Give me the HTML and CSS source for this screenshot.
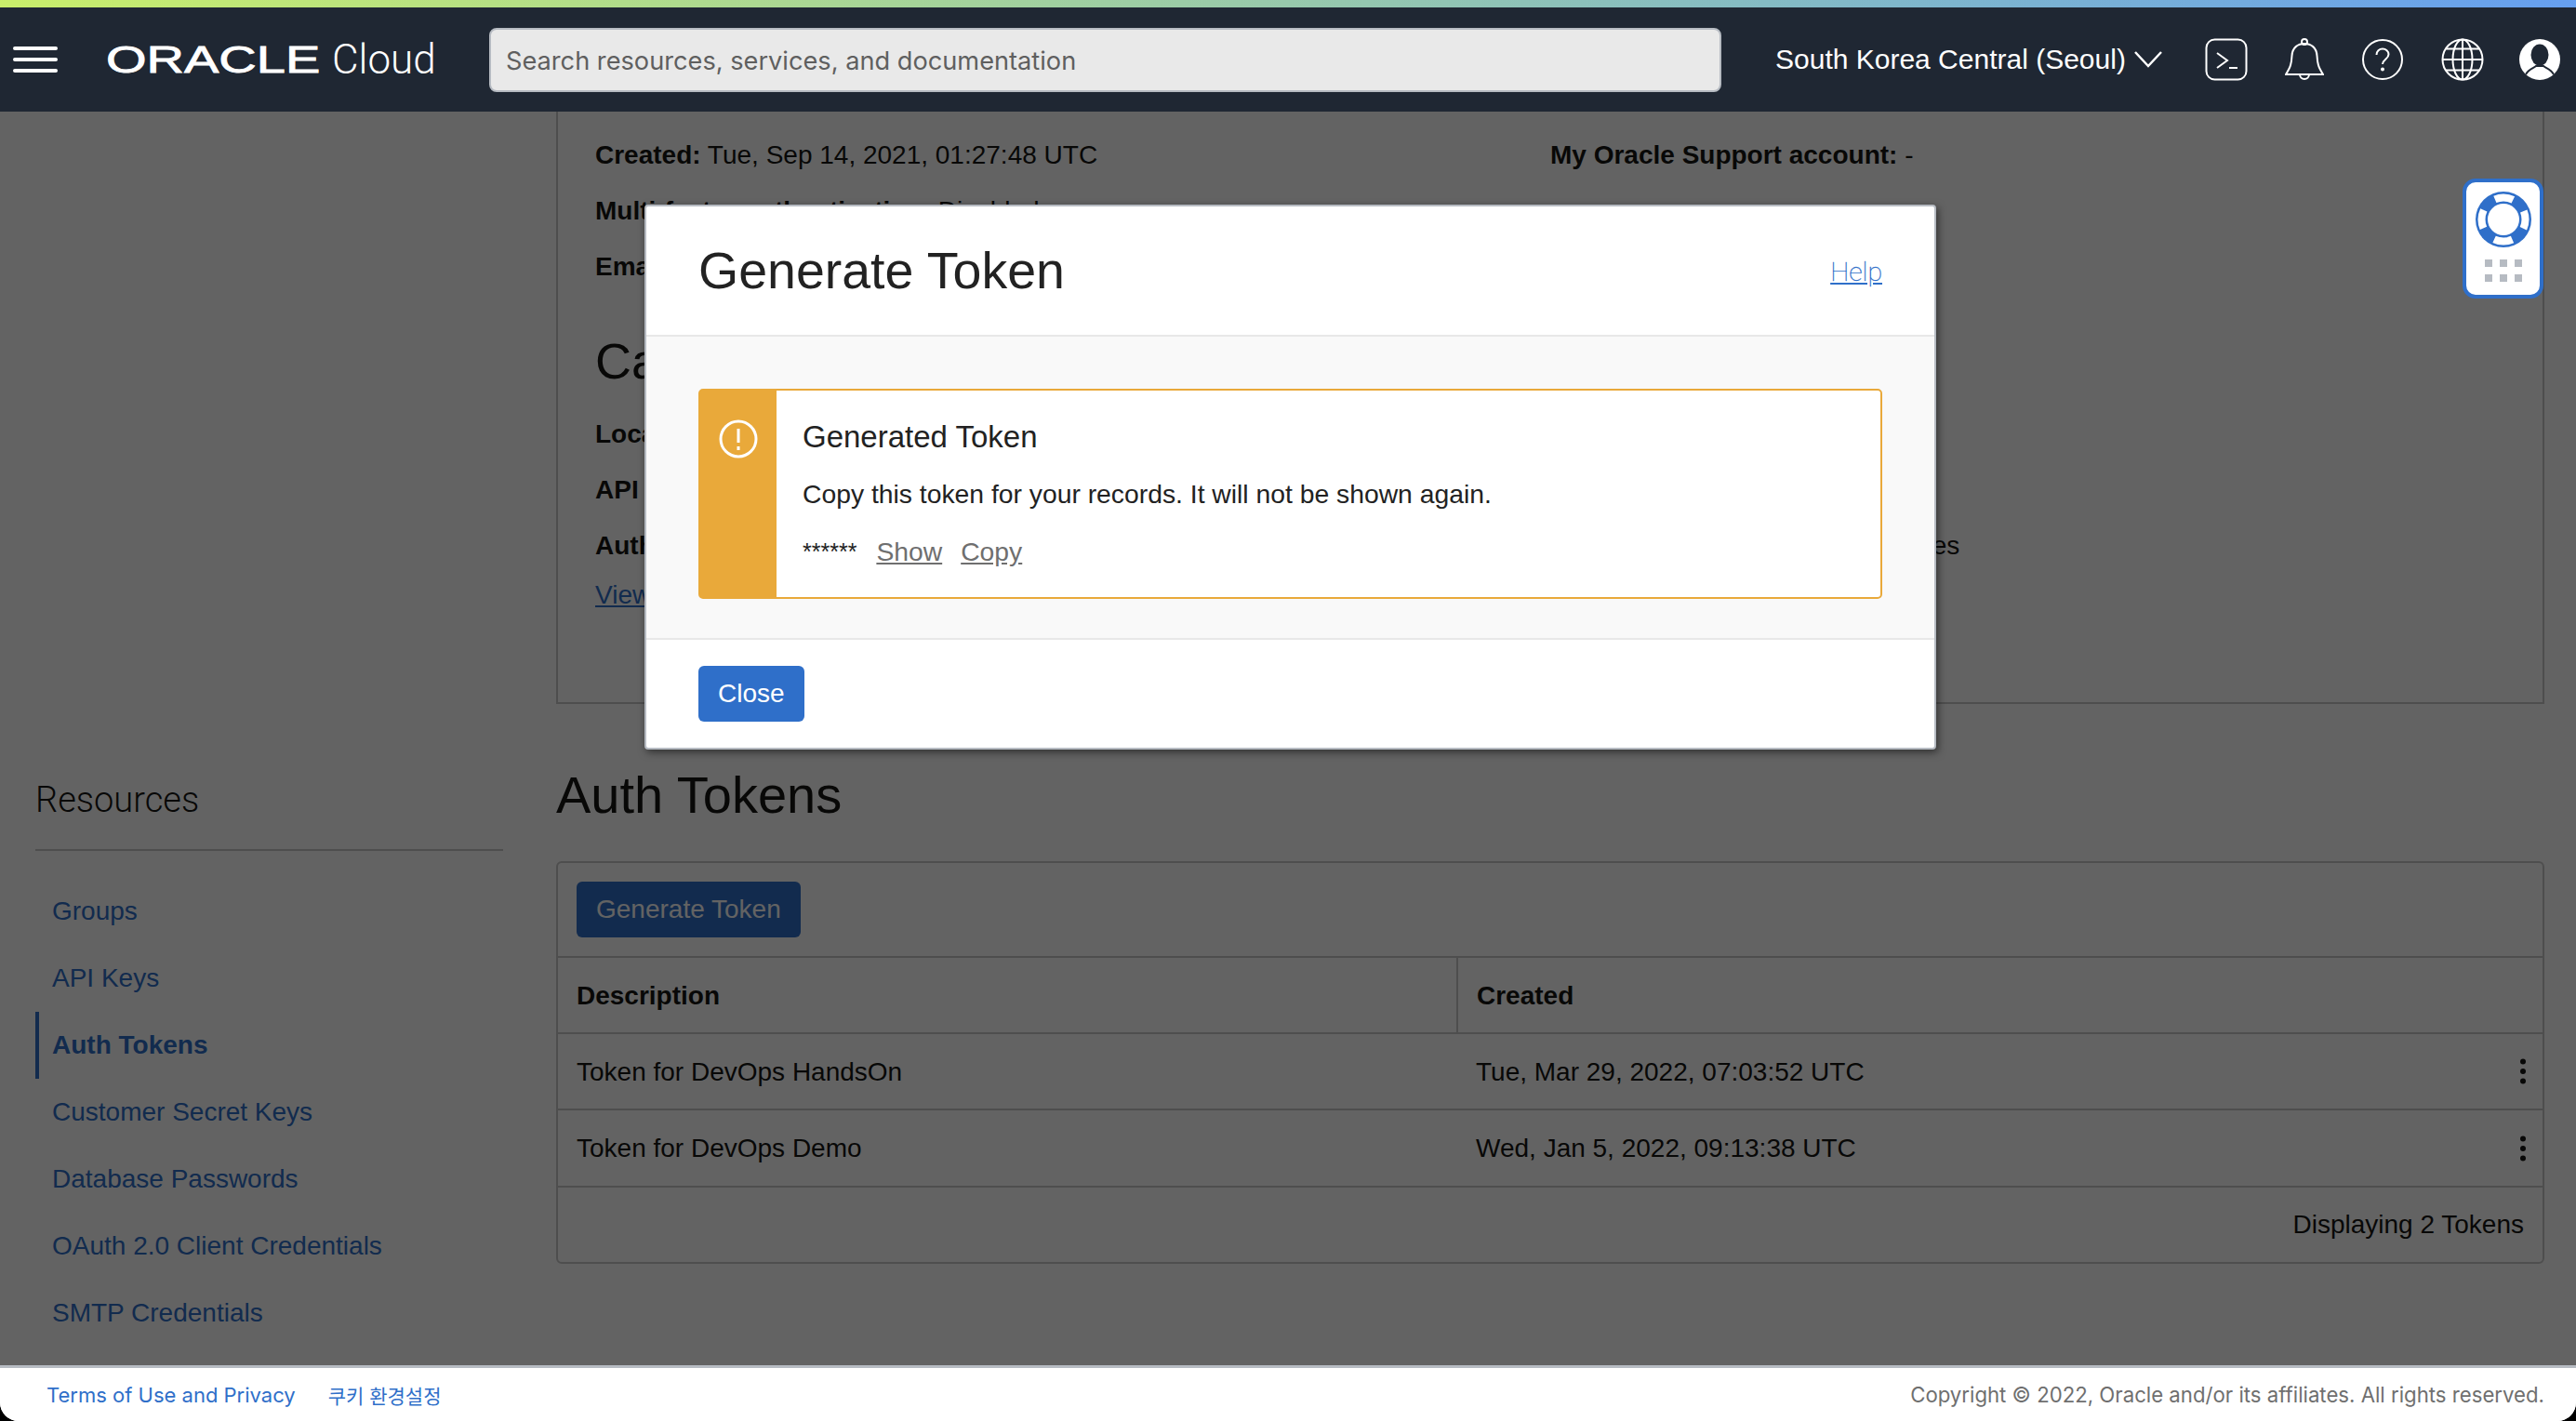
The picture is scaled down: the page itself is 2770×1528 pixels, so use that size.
FILE: index.html
```html
<!DOCTYPE html>
<html>
<head>
    <meta charset="UTF-8">
    <title>Auth Tokens - Oracle Cloud</title>
    <link rel="stylesheet" href="styles.css">
</head>
<body>
    <div class="stripe"></div>
    <header class="topbar">
        <div class="menu-btn"><span></span><span></span><span></span></div>
        <div class="brand">
            <span class="brand-oracle">ORACLE</span>
            <span class="brand-cloud">Cloud</span>
        </div>
        <div class="search">Search resources, services, and documentation</div>
        <div class="region">
            South Korea Central (Seoul)
            <svg width="30" height="18" viewBox="0 0 30 18" fill="none" stroke="#fff" stroke-width="2.5"><path d="M1 1l14 15L29 1"/></svg>
        </div>
        <div class="top-icons">
            <svg width="46" height="46" viewBox="0 0 46 46" fill="none" stroke="#fff" stroke-width="2"><rect x="1.500" y="1.500" width="43" height="43" rx="9"/><path d="M13 16l11 8-11 8M26 32h9"/></svg>
            <svg width="42" height="46" viewBox="0 0 42 46" fill="none" stroke="#fff" stroke-width="2"><circle cx="21" cy="4" r="3"/><path d="M1 39c5-8 6-11 6.500-20C8 10 14 6 21 6s13 4 13.500 13c.5 9 1.500 12 6.500 20z"/><path d="M16 39a5 5 0 0 0 10 0"/></svg>
            <svg width="46" height="46" viewBox="0 0 46 46" fill="none" stroke="#fff" stroke-width="2"><circle cx="23" cy="23" r="21"/><path d="M16.500 18c0-4 3-6.500 6.500-6.500s6.500 2.500 6.500 6c0 5-6.500 5.500-6.500 10.500"/><circle cx="23" cy="33.500" r="1" fill="#fff"/></svg>
            <svg width="46" height="46" viewBox="0 0 46 46" fill="none" stroke="#fff" stroke-width="2"><circle cx="23" cy="23" r="21.500"/><ellipse cx="23" cy="23" rx="10.500" ry="21.500"/><path d="M23 1.500v43M1.500 23h43M5 11.500h36M5 34.500h36"/></svg>
            <svg class="avatar" width="44" height="44" viewBox="0 0 44 44"><circle cx="22" cy="22" r="22" fill="#fff"/><ellipse cx="22" cy="17" rx="9.500" ry="11.500" fill="#1f2733"/><path d="M7 38c3-6 9-7 11-9h8c2 2 8 3 11 9" fill="none" stroke="#1f2733" stroke-width="2"/></svg>
        </div>
    </header>

    <div class="content">
        <aside class="sidebar">
            <h3>Resources</h3>
            <ul class="side-nav">
                <li><a href="#">Groups</a></li>
                <li><a href="#">API Keys</a></li>
                <li class="active"><a href="#">Auth Tokens</a></li>
                <li><a href="#">Customer Secret Keys</a></li>
                <li><a href="#">Database Passwords</a></li>
                <li><a href="#">OAuth 2.0 Client Credentials</a></li>
                <li><a href="#">SMTP Credentials</a></li>
            </ul>
        </aside>

        <main class="main">
            <section class="info-panel">
                <div class="info-grid">
                    <div class="info-row"><b>Created:</b> Tue, Sep 14, 2021, 01:27:48 UTC</div>
                    <div class="info-row"><b>My Oracle Support account:</b> -</div>
                    <div class="info-row"><b>Multi-factor authentication:</b> Disabled</div>
                    <div class="info-row"></div>
                    <div class="info-row"><b>Email:</b> -</div>
                    <div class="info-row"></div>
                </div>
                <h2>Capabilities</h2>
                <div class="info-grid">
                    <div class="info-row"><b>Local Password:</b> Yes</div>
                    <div class="info-row"><b>SMTP Credentials:</b> Yes</div>
                    <div class="info-row"><b>API Keys:</b> Yes</div>
                    <div class="info-row"><b>Customer Secret Keys:</b> Yes</div>
                    <div class="info-row"><b>Auth Tokens:</b> Yes</div>
                    <div class="info-row"><b>OAuth 2.0 Client Credentials:</b> Yes</div>
                </div>
                <a href="#" class="view-link">View Details</a>
            </section>

            <h1>Auth Tokens</h1>
            <section class="tokens">
                <div class="toolbar"><button type="button" class="button">Generate Token</button></div>
                <table>
                    <thead>
                        <tr><th class="col-desc">Description</th><th colspan="2">Created</th></tr>
                    </thead>
                    <tbody>
                        <tr>
                            <td>Token for DevOps HandsOn</td>
                            <td>Tue, Mar 29, 2022, 07:03:52 UTC</td>
                            <td class="col-menu"><svg width="8" height="28" viewBox="0 0 8 28" fill="#161513"><circle cx="4" cy="3.500" r="3"/><circle cx="4" cy="14" r="3"/><circle cx="4" cy="24.500" r="3"/></svg></td>
                        </tr>
                        <tr>
                            <td>Token for DevOps Demo</td>
                            <td>Wed, Jan 5, 2022, 09:13:38 UTC</td>
                            <td class="col-menu"><svg width="8" height="28" viewBox="0 0 8 28" fill="#161513"><circle cx="4" cy="3.500" r="3"/><circle cx="4" cy="14" r="3"/><circle cx="4" cy="24.500" r="3"/></svg></td>
                        </tr>
                    </tbody>
                </table>
                <div class="tokens-foot">Displaying 2 Tokens</div>
            </section>
        </main>

        <div class="overlay"></div>

        <div class="help-widget">
            <svg width="62" height="62" viewBox="0 0 62 62">
                <circle cx="31" cy="31" r="30" fill="#2f6fc9"/>
                <circle cx="31" cy="31" r="23.500" fill="none" stroke="#fff" stroke-width="8" stroke-dasharray="20 16.900" stroke-dashoffset="10"/>
                <circle cx="31" cy="31" r="17" fill="#fff"/>
            </svg>
            <div class="grip"><i></i><i></i><i></i><i></i><i></i><i></i></div>
        </div>

        <div class="modal">
            <div class="modal-head">
                <div class="modal-title">Generate Token</div>
                <a href="#" class="help-link">Help</a>
            </div>
            <div class="modal-body">
                <div class="alert">
                    <div class="alert-side">
                        <svg width="42" height="42" viewBox="0 0 42 42" fill="none" stroke="#fff" stroke-width="3"><circle cx="21" cy="21" r="19"/><path d="M21 10v15M21 29v4"/></svg>
                    </div>
                    <div class="alert-main">
                        <div class="alert-title">Generated Token</div>
                        <p>Copy this token for your records. It will not be shown again.</p>
                        <div class="token-line">
                            <span class="stars">******</span>
                            <a href="#">Show</a>
                            <a href="#">Copy</a>
                        </div>
                    </div>
                </div>
            </div>
            <div class="modal-foot"><button type="button" class="button">Close</button></div>
        </div>
    </div>

    <footer class="page-foot">
        <a href="#">Terms of Use and Privacy</a>
        <a href="#" class="cookie-link">쿠키 환경설정</a>
        <span class="copyright">Copyright © 2022, Oracle and/or its affiliates. All rights reserved.</span>
    </footer>
</body>
</html>
```

FILE: styles.css
```css
html {
    background-color: #000;
}
body {
    margin: 0;
    height: 100vh;
    display: flex;
    flex-direction: column;
    overflow: hidden;
    background-color: #fff;
    border-radius: 0 0 20px 20px;
    font-family: "Liberation Sans", Arial, sans-serif;
    font-size: 28px;
    color: #161513;
}
a {
    color: #2f6fc9;
}
.stripe {
    height: 8px;
    background: linear-gradient(90deg, #c9ee6b, #83bac6 70%, #669ff0);
}

/* top bar */
.topbar {
    height: 112px;
    flex: none;
    position: relative;
    z-index: 3;
    display: flex;
    align-items: center;
    background-color: #1f2733;
    color: #fff;
}
.menu-btn {
    width: 48px;
    margin-left: 14px;
    display: flex;
    flex-direction: column;
    gap: 8px;
}
.menu-btn span {
    height: 4px;
    border-radius: 2px;
    background-color: #fff;
}
.brand {
    width: 412px;
    margin-left: 52px;
    display: flex;
    align-items: center;
}
.brand-oracle {
    width: 243px;
    font-size: 40px;
    line-height: 40px;
    -webkit-text-stroke: 0.8px #fff;
    transform: scaleX(1.4);
    transform-origin: left center;
}
.brand-cloud {
    font-family: Roboto, sans-serif;
    font-weight: 300;
    font-size: 44px;
}
.search {
    width: 1325px;
    height: 69px;
    box-sizing: border-box;
    padding-left: 16px;
    line-height: 68px;
    background-color: #e9e9e9;
    border: 2px solid #b6bbc2;
    border-radius: 8px;
    font-family: Inter, sans-serif;
    font-size: 27.2px;
    color: #5f5f5f;
}
.region {
    margin-left: 58px;
    display: flex;
    align-items: center;
    gap: 9px;
    font-size: 30px;
}
.top-icons {
    margin-left: 46px;
    display: flex;
    align-items: center;
    gap: 40px;
}
.avatar {
    margin-left: -2px;
}

/* page behind the dialog */
.content {
    flex: 1;
    position: relative;
    display: flex;
    overflow: hidden;
    min-height: 0;
}
.sidebar {
    width: 598px;
    flex: none;
    box-sizing: border-box;
    padding: 710px 57px 0 38px;
}
.sidebar h3 {
    margin: 0;
    padding-bottom: 23px;
    border-bottom: 2px solid #c9c9c9;
    font-family: Roboto, sans-serif;
    font-weight: 300;
    font-size: 38px;
    line-height: 60px;
}
.side-nav {
    list-style: none;
    margin: 29px 0 0;
    padding: 0;
}
.side-nav li {
    height: 72px;
    line-height: 72px;
    padding-left: 18px;
}
.side-nav a {
    text-decoration: none;
}
.side-nav .active {
    padding-left: 14px;
    border-left: 4px solid #2f6fc9;
    font-weight: bold;
}
.main {
    flex: 1;
    min-width: 0;
    padding-right: 34px;
}
.info-panel {
    padding: 17px 40px 92px;
    border: 2px solid #c9c9c9;
    border-top: 0;
}
.info-grid {
    display: grid;
    grid-template-columns: 1027px 1fr;
}
.info-row {
    height: 60px;
    line-height: 60px;
    white-space: nowrap;
}
.info-panel h2 {
    margin: 0;
    padding-top: 22px;
    font-weight: normal;
    font-size: 54px;
    line-height: 98px;
}
.view-link {
    display: block;
    line-height: 46px;
}
.main h1 {
    margin: 63px 0 36px;
    font-weight: normal;
    font-size: 56px;
    line-height: 70px;
}
.tokens {
    border: 2px solid #c9c9c9;
    border-radius: 6px;
}
.toolbar {
    height: 100px;
    box-sizing: border-box;
    padding: 20px;
}
.button {
    height: 60px;
    padding: 0 21px;
    border: 0;
    border-radius: 6px;
    background-color: #2f6fc9;
    color: #fff;
    font-family: inherit;
    font-size: 28px;
}
.tokens table {
    width: 100%;
    border-collapse: collapse;
}
.tokens th, .tokens td {
    height: 82px;
    box-sizing: border-box;
    padding: 1px 20px 0;
    text-align: left;
    border-top: 2px solid #c9c9c9;
}
.tokens .col-desc {
    width: 967px;
    border-right: 2px solid #c9c9c9;
}
.tokens .col-menu {
    width: 8px;
    padding: 0 17px 0 0;
    line-height: 0;
}
.tokens-foot {
    height: 82px;
    box-sizing: border-box;
    padding-right: 20px;
    line-height: 80px;
    text-align: right;
    border-top: 2px solid #c9c9c9;
}

/* dim layer, widget and dialog */
.overlay {
    position: absolute;
    inset: 0;
    background-color: rgba(0, 0, 0, 0.61);
}
.help-widget {
    position: absolute;
    top: 72px;
    right: 35px;
    width: 87px;
    height: 129px;
    box-sizing: border-box;
    padding-top: 9px;
    border: 4px solid #2f6fc9;
    border-radius: 14px;
    background-color: #fff;
    text-align: center;
}
.help-widget svg {
    display: block;
    margin: 0 auto;
}
.grip {
    display: grid;
    grid-template-columns: repeat(3, 8px);
    gap: 8px;
    justify-content: center;
    margin-top: 12px;
}
.grip i {
    height: 8px;
    background-color: #b6bbc2;
}
.modal {
    position: absolute;
    top: 100px;
    left: 693px;
    width: 1389px;
    height: 586px;
    box-sizing: border-box;
    display: flex;
    flex-direction: column;
    border: 2px solid #b6bbc2;
    border-radius: 4px;
    background-color: #fff;
    box-shadow: 2px 3px 8px rgba(0, 0, 0, 0.5);
}
.modal-head {
    height: 138px;
    flex: none;
    display: flex;
    align-items: center;
    justify-content: space-between;
    padding: 0 56px;
}
.modal-title {
    font-size: 55.5px;
    color: #222;
}
.help-link {
    margin-top: 2px;
    font-family: Roboto, sans-serif;
    font-weight: 100;
    font-size: 28.5px;
    -webkit-text-stroke: 0.3px #2f6fc9;
}
.modal-body {
    height: 328px;
    flex: none;
    box-sizing: border-box;
    padding: 56px;
    background-color: #f9f9f9;
    border-top: 2px solid #e8e8e8;
    border-bottom: 2px solid #e8e8e8;
}
.alert {
    height: 226px;
    display: flex;
    box-sizing: border-box;
    border: 2px solid #e9a93a;
    border-radius: 5px;
    background-color: #fff;
}
.alert-side {
    width: 82px;
    flex: none;
    box-sizing: border-box;
    padding: 31px 0 0 20px;
    background-color: #e9a93a;
}
.alert-main {
    padding: 30px 28px 0;
    color: #222;
    font-size: 28.3px;
}
.alert-title {
    font-size: 33px;
    line-height: 40px;
}
.alert-main p {
    margin: 21px 0 0;
    line-height: 40px;
}
.token-line {
    margin-top: 22px;
    display: flex;
    gap: 20px;
    line-height: 40px;
}
.token-line a {
    color: #6f6f6f;
}
.stars {
    margin-right: 1px;
    font-size: 25px;
}
.modal-foot {
    padding: 28px 56px;
}

/* page footer */
.page-foot {
    height: 60px;
    flex: none;
    box-sizing: border-box;
    position: relative;
    z-index: 3;
    display: flex;
    align-items: center;
    gap: 35px;
    padding: 0 34px 0 50px;
    border-top: 3px solid #b6bbc2;
    background-color: #fff;
    font-family: Inter, "Noto Sans CJK KR", sans-serif;
    font-size: 22px;
}
.page-foot a {
    text-decoration: none;
}
.page-foot .cookie-link {
    font-size: 21px;
}
.copyright {
    margin-left: auto;
    font-size: 22.2px;
    color: #6f6f6f;
}
```
